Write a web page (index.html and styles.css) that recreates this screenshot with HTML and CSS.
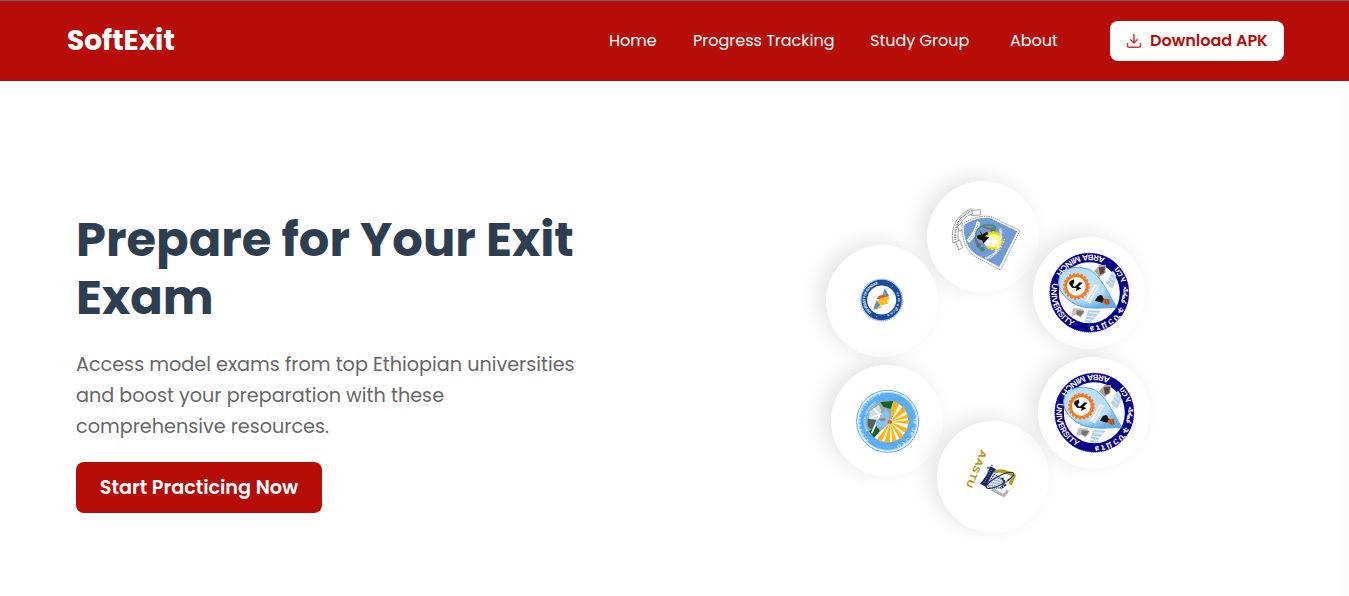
FILE: index.html
```html
<!DOCTYPE html>
<html lang="en">
<head>
<meta charset="utf-8">
<title>SoftExit</title>
<link rel="stylesheet" href="styles.css">
</head>
<body>
<header class="header">
  <div class="logo">SoftExit</div>
  <nav class="nav">
    <a class="home">Home</a><a class="progress">Progress Tracking</a><a class="study">Study Group</a><a class="about">About</a>
  </nav>
  <button class="download">
    <svg width="16" height="16" viewBox="0 0 16 16" fill="none" stroke="#c93a3a" stroke-width="1.5" stroke-linecap="round" stroke-linejoin="round"><path d="M8 1.5v8.3M4.8 6.8 8 10l3.2-3.2M1.5 10.5v2.2c0 .9.6 1.5 1.5 1.5h10c.9 0 1.5-.6 1.5-1.5v-2.2"/></svg>
    <span>Download APK</span>
  </button>
</header>
<main class="hero">
  <section class="copy">
    <h1>Prepare for Your Exit<br>Exam</h1>
    <p>Access model exams from top Ethiopian universities<br>and boost your preparation with these<br>comprehensive resources.</p>
    <button class="cta">Start Practicing Now</button>
  </section>
  <section class="orbit">
    <div class="disc d1">
      <svg viewBox="82 63 336 336">
        <g fill="#fff" stroke="#777" stroke-width="2">
          <path d="M214 152 242 149 242 165 216 167Z"/>
          <path d="M160 249C152 210 166 166 214 147L219 161C184 172 170 202 176 243Z"/>
          <path d="M168 246 180 240 189 263 177 269Z"/>
          <path d="M172 200 188 188 196 206 180 214Z"/>
        </g>
        <path d="M167 239C163 203 178 169 213 154" fill="none" stroke="#666" stroke-width="6" stroke-dasharray="2 3"/>
        <path d="M187 193C210 176 242 166 272 169L361 212 302 330 227 290C199 273 186 238 187 193Z" fill="#fff" stroke="#888" stroke-width="2.5" stroke-dasharray="5 2"/>
        <path d="M192 197C214 180 244 171 270 174L353 214 299 321 232 285C205 268 192 240 192 197Z" fill="#739bd3"/>
        <path d="M201 240Q222 218 232 183L242 188Q234 222 209 248Z" fill="#fff"/>
        <path d="M208 239Q228 219 236 189" fill="none" stroke="#708090" stroke-width="4" stroke-dasharray="2 4"/>
        <path d="M228 241Q223 201 258 196T286 210M228 241Q231 264 252 272" fill="none" stroke="#398b75" stroke-width="4"/>
        <g fill="#398b75"><circle cx="253" cy="198" r="5"/><circle cx="279" cy="209" r="8"/><circle cx="237" cy="256" r="7"/><circle cx="248" cy="268" r="7"/></g>
        <path d="M254 202 276 207M230 240 240 262" stroke="#b54560" stroke-width="4"/>
        <circle cx="281" cy="242" r="24" fill="#ffff68" stroke="#f0de00" stroke-width="9" stroke-dasharray="10 2"/>
        <path d="M252 248 264 229 284 232 294 247 283 258 262 259Z" fill="#fff"/>
        <path d="M231 227 244 223 239 211 249 223 262 215 267 222 254 229 269 232 260 241 251 251 247 241 234 237Z" fill="#111"/>
        <path id="shieldArc" d="M257 299Q311 290 307 199" fill="none"/>
        <text class="arms"><textPath href="#shieldArc" textLength="120">MADDA WALABU UNIVERSITY</textPath></text>
        <path d="M281 283Q306 272 316 232" fill="none" stroke="#e8f0ff" stroke-width="5" stroke-dasharray="3 5"/>
      </svg>
    </div>
    <div class="disc d2">
      <svg viewBox="0 0 336 336">
        <defs>
          <radialGradient id="drop" cx="40%" cy="42%" r="62%"><stop offset=".6" stop-color="#b9e0fb"/><stop offset="1" stop-color="#62aee9"/></radialGradient>
          <path id="ring" d="M114 0A114 114 0 1 0-114 0A114 114 0 1 0 114 0"/>
          <path id="ringEast" d="M0 115A115 115 0 1 0 0-115"/>
        </defs>
        <g id="arba" transform="translate(169 167)">
          <circle r="105" fill="#fff" stroke="#080088" stroke-width="27"/>
          <circle r="118" fill="none" stroke="#080088" stroke-width="3" stroke-dasharray="4 2"/>
          <path d="M30-82 50-84 48-60 31-47 14-64Z" fill="#aaa6a2"/><path d="M28-76 47-78 45-59 32-54Z" fill="#604342"/>
          <path d="M70-66C88-54 80-30 68-12L48-30C59-39 60-52 70-66Z" fill="#b7d2e5"/>
          <path d="M69-59 79-51M62-49 75-38M56-39 70-27" stroke="#f7fbff" stroke-width="3"/>
          <path d="M-48 46-20 48-14 61-27 75-40 67-54 69Z" fill="#c2c0bd"/><path d="M-38 53-15 55-27 71-39 64Z" fill="#777572"/>
          <path d="M-4 53 34 54 18 73 5 91-13 87Z" fill="#b1d1e9"/><path d="M-1 60 26 62M-6 70 16 74M-10 80 10 84" stroke="#fff" stroke-width="3"/>
          <path d="M-92-37C-88-69-50-82-17-74C20-69 40-32 82 44C36 45-14 54-52 29C-79 11-95-12-92-37Z" fill="url(#drop)" stroke="#5aa4df" stroke-width="3"/>
          <circle cx="-39" cy="-19" r="32" fill="#fff" stroke="#f47b20" stroke-width="8"/>
          <circle cx="-39" cy="-19" r="37" fill="none" stroke="#f47b20" stroke-width="6" stroke-dasharray="7 4.62"/>
          <path d="M-59-34-47-40-45-31-50-22-44-18-29-31-20-30-33-18-24-13-40-5-38-13-52-15-61-27Z" fill="#090909"/>
          <path d="M-16 22 13-27 28-20 2 33Z" fill="#f4f7fa"/><path d="M-13 21 14-25M-5 27 22-20" stroke="#8998a8" stroke-width="2" stroke-dasharray="3 2"/>
          <path d="M17 24C23 11 31 3 39 9L46 24 38 30Z" fill="#171313"/><path d="M39 29 44 18 60 19 61 35 52 37Z" fill="#dc641e"/><path d="M46 20 51 35M54 20 59 35" stroke="#6c2c17" stroke-width="2"/>
          <g class="seal">
            <text><textPath href="#ring" startOffset="130" textLength="169" lengthAdjust="spacingAndGlyphs">ARBA MINCH</textPath></text>
            <text><textPath href="#ring" startOffset="328" textLength="156" lengthAdjust="spacingAndGlyphs">UNIVERSITY</textPath></text>
            <text class="geez"><textPath href="#ringEast" startOffset="2" textLength="126">ዩኒቨርሲቲ</textPath></text>
            <text class="geez"><textPath href="#ringEast" startOffset="145" textLength="52">ምንጭ</textPath></text>
            <text class="geez"><textPath href="#ringEast" startOffset="217" textLength="50">አርባ</textPath></text>
          </g>
        </g>
      </svg>
    </div>
    <div class="disc d3">
      <svg viewBox="48 46 336 336">
        <circle cx="215" cy="211" r="63" fill="#d2dded" stroke="#7087aa" stroke-width="2" stroke-dasharray="4 2"/>
        <circle cx="215" cy="211" r="52" fill="#fff" stroke="#174da2" stroke-width="17"/>
        <path id="smallRing" d="M184 248A48 48 0 0 1 226 164" fill="none"/>
        <path id="smallRingB" d="M258 189A48 48 0 0 1 223 258" fill="none"/>
        <g class="tiny"><text><textPath href="#smallRing" textLength="108">UNIVERSITY OF GONDAR</textPath></text><text><textPath href="#smallRingB" textLength="80">ጎንደር ዩኒቨርሲቲ</textPath></text></g>
        <g fill="#62d3d8"><circle cx="247" cy="170" r="2"/><circle cx="200" cy="261" r="2"/></g>
        <path d="M224 176 237 198 230 206 216 201Z" fill="#598cad"/><path d="M217 199 223 183 229 202Z" fill="#79b5d0"/>
        <path d="M190 239 200 212 212 224 201 239Z" fill="#598cad"/><path d="M200 207 207 198 222 195 236 204 218 212Z" fill="#dc573c"/>
        <path d="M205 209 218 204 235 200 239 209 230 213 235 222 215 227 206 222Z" fill="#ffbe15"/><path d="M193 237 215 227 211 236Z" fill="#efa53b"/>
      </svg>
    </div>
    <div class="disc d4">
      <svg viewBox="62 45 336 336">
        <circle cx="232" cy="214" r="93" fill="#fff" stroke="#5aa7ec" stroke-width="3"/>
        <circle cx="232" cy="214" r="75" fill="#fff" stroke="#5badf6" stroke-width="26"/>
        <circle cx="232" cy="214" r="87" fill="none" stroke="#d8efff" stroke-width="2"/>
        <path d="M240 216 248 153A63 63 0 0 1 267 162ZM240 216 277 169A63 63 0 0 1 287 184ZM240 216 292 192A63 63 0 0 1 295 203ZM240 216 296 210A63 63 0 0 1 294 222ZM240 216 291 235A63 63 0 0 1 284 249ZM240 216 279 257A63 63 0 0 1 268 267ZM240 216 259 272A63 63 0 0 1 246 276ZM240 216 239 278A63 63 0 0 1 222 276ZM240 216 214 274A63 63 0 0 1 200 268Z" fill="#ffb313"/>
        <path d="M248 153C207 143 169 175 170 217C171 241 179 256 190 263L240 216Z" fill="#9ba8a2"/>
        <path d="M210 156 249 153 240 177 219 170ZM176 244 201 227 208 244 191 263Z" fill="#14602b"/>
        <path d="M179 184 205 165 213 181 204 210 174 209Z" fill="#d5dedd"/>
        <path d="M172 206 199 210 185 240 172 229Z" fill="#54615b"/>
        <path d="M190 175 204 190M181 204 214 191M184 250 208 196" stroke="#fff" stroke-width="5"/>
        <path d="M226 174 238 191 236 206 226 228 202 235 193 217 207 204Z" fill="#83c5fa"/>
        <path d="M204 206 222 204 229 210 212 214Z" fill="#aa8264"/><circle cx="239" cy="216" r="6" fill="#ed5a28"/>
        <path id="blueRing" d="M175 271A80 80 0 0 1 257 138" fill="none"/>
        <path id="blueInner" d="M173 243A66 66 0 0 1 210 152" fill="none"/>
        <path id="blueRingB" d="M262 297A88 88 0 0 0 318 188" fill="none"/>
        <g class="pale"><text><textPath href="#blueRing" textLength="170">BAHIR DAR UNIVERSITY</textPath></text><text class="inner"><textPath href="#blueInner" textLength="96">WISDOM AT THE SOURCE</textPath></text><text class="large"><textPath href="#blueRingB" textLength="122">ባሕር ዳር ዩኒ</textPath></text></g>
      </svg>
    </div>
    <div class="disc d5">
      <svg viewBox="51 62 336 336">
        <text class="aastu" transform="translate(184 147) rotate(113)" textLength="120" lengthAdjust="spacingAndGlyphs">AASTU</text>
        <path d="M222 216C240 207 263 215 282 226L270 253" fill="none" stroke="#b39b14" stroke-width="10"/>
        <path d="M215 267 251 286 264 270" fill="none" stroke="#b5b5b8" stroke-width="9"/>
        <path d="M210 198 228 207C213 223 209 240 198 259L180 250C198 231 204 217 210 198Z" fill="#142362"/>
        <path d="M214 209Q202 235 189 250" fill="none" stroke="#9ca4cd" stroke-width="3" stroke-dasharray="3 4"/>
        <path d="M222 222 238 231 248 235 253 244 248 256 239 263 209 263 203 254Z" fill="#d8def0" stroke="#142362" stroke-width="3" stroke-dasharray="4 2"/>
        <path d="M220 229 247 238M215 237 248 246M211 246 246 253M208 255 238 260" stroke="#52608f" stroke-width="2" stroke-dasharray="4 3"/>
        <path d="M246 234 252 239 250 249 255 254 242 265" fill="none" stroke="#142362" stroke-width="7" stroke-dasharray="5 3"/>
        <ellipse cx="240" cy="240" rx="46" ry="13" transform="rotate(-28 240 240)" fill="none" stroke="#142362" stroke-width="3"/>
        <path d="M201 199h7v6h-7zM213 193h5v5h-5zM203 210h5v5h-5z" fill="#65749e"/>
        <circle cx="266" cy="238" r="3" fill="#142362"/><circle cx="260" cy="245" r="3" fill="#b8a31d"/>
      </svg>
    </div>
    <div class="disc d6"><svg viewBox="0 0 336 336"><use href="#arba"/></svg></div>
  </section>
</main>
</body>
</html>
```
FILE: styles.css
```css
* { box-sizing: border-box; }
body { margin: 0; height: 596px; overflow: hidden; font-family: Poppins, Inter, "Open Sans", sans-serif; background: #fff; }
button { font: inherit; border: 0; }
.header { height: 81px; border-top: 1px solid #666; background: #b70d08; color: #fff; display: flex; align-items: center; padding: 0 65px 0 67px; }
.logo { font-size: 28px; font-weight: 700; line-height: 40px; white-space: nowrap; }
.nav { display: flex; margin-left: auto; font-size: 16px; line-height: 24px; white-space: nowrap; }
.nav a { flex: none; }
.home { width: 84px; }
.progress { width: 177px; }
.study { width: 140px; }
.about { width: 100px; }
.download { width: 174px; height: 40px; border-radius: 8px; background: #fff; color: #b70d08; font-size: 16px; font-weight: 600; padding: 0 16px; display: flex; align-items: center; gap: 8px; white-space: nowrap; }
.download svg { flex: none; }
.download span { padding-bottom: 1px; }
.hero { height: 515px; display: flex; justify-content: space-between; padding: 94px 209px 0 76px; background: linear-gradient(to left, #fafafa, #fff 10px); }
.copy { padding-top: 36px; white-space: nowrap; }
h1 { margin: 0; font-size: 48px; line-height: 58px; font-weight: 700; color: #2c3e50; }
p { margin: 22px 0 20px; font-size: 19.2px; line-height: 31px; color: #666; }
.cta { display: block; width: 246px; height: 51px; padding: 0; border-radius: 8px; background: #b70d08; color: #fff; font-size: 19.2px; font-weight: 600; }
.orbit { position: relative; width: 320px; height: 370px; }
.disc { position: absolute; width: 112px; height: 112px; border-radius: 50%; background: #fff; box-shadow: -8px -4px 20px rgba(0, 0, 0, .1); }
.disc svg { display: block; width: 112px; height: 112px; }
.d1 { left: 107.3px; top: 6px; }
.d2 { left: 213.3px; top: 61.7px; }
.d3 { left: 6px; top: 70.3px; }
.d4 { left: 10.7px; top: 190px; }
.d5 { left: 117px; top: 245.7px; }
.d6 { left: 218.3px; top: 181.7px; }
.seal { fill: #fff; font: 600 23px Inter, "Noto Sans", sans-serif; }
.seal .geez { font-size: 25px; }
.arms { fill: #edf4ff; font: 700 11px Inter, sans-serif; }
.tiny { fill: #fff; font: 700 10px Inter, sans-serif; }
.pale { fill: #d8efff; font: 700 10px Inter, sans-serif; }
.pale .inner { font-size: 8px; }
.pale .large { font-size: 20px; }
.aastu { fill: #b39b14; font: 700 27px Inter, sans-serif; }
```
